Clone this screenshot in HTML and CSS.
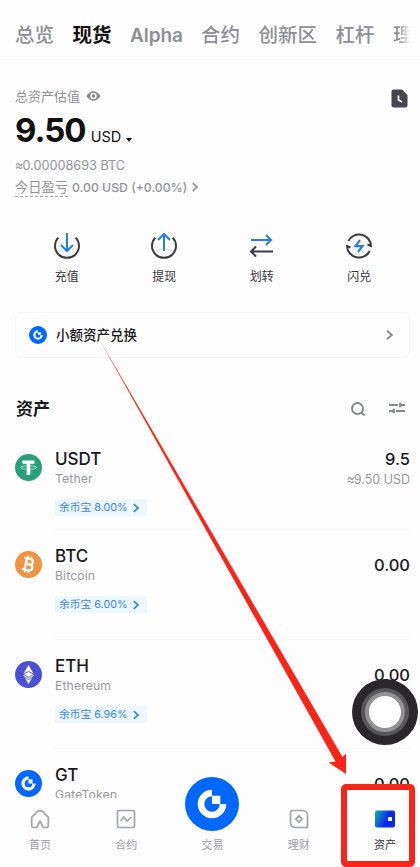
FILE: index.html
```html
<!DOCTYPE html>
<html lang="zh-CN">
<head>
<meta charset="utf-8">
<title>资产</title>
<link rel="stylesheet" href="styles.css">
</head>
<body>
<svg class="defs" width="0" height="0">
  <symbol id="gate" viewBox="0 0 54 54">
    <circle cx="27" cy="27" r="27" fill="#0068ff"/>
    <path d="M27 16A11 11 0 1 0 38 27" fill="none" stroke="#fff" stroke-width="6.600"/>
    <path d="M27 18.700h8.300V27H27z" fill="#fff"/>
  </symbol>
  <symbol id="chev" viewBox="0 0 8 10"><path d="M1.800 1.200 6 5 1.800 8.800" fill="none" stroke="currentColor" stroke-width="1.700"/></symbol>
</svg>
<div class="screen">
  <nav class="tabs">
    <span>总览</span><span class="on">现货</span><span class="alpha">Alpha</span><span>合约</span><span>创新区</span><span>杠杆</span><span class="fade">理</span>
  </nav>
  <section class="summary">
    <div class="top">
      <div class="label">总资产估值
        <svg width="15" height="12" viewBox="0 0 15 12"><path d="M.3 6Q7.500-3.500 14.700 6 7.500 15.500.3 6Z" fill="#85878e"/><circle cx="7.500" cy="6" r="3.200" fill="#fff"/><circle cx="7.500" cy="6" r="1.700" fill="#85878e"/></svg>
      </div>
      <svg class="history" width="17" height="19" viewBox="0 0 17 19"><path d="M2.500.5H11L16.500 6v10.500a2 2 0 0 1-2 2h-12a2 2 0 0 1-2-2v-14a2 2 0 0 1 2-2Z" fill="#464650"/><path d="M7.500 6.500v4.500l3.500 2" fill="none" stroke="#fff" stroke-width="1.700"/></svg>
    </div>
    <div class="total"><b>9.50</b><span>USD</span><i></i></div>
    <div class="btc"><small>≈</small>0.00008693 BTC</div>
    <div class="pnl"><u>今日盈亏</u><span>0.00 USD (+0.00%)</span><svg width="8" height="10"><use href="#chev"/></svg></div>
  </section>
  <section class="actions">
    <div><svg width="28" height="28" viewBox="0 0 28 28"><path d="M5.300 5.600A12 12 0 1 0 22.700 5.600" fill="none" stroke="#3b3b40" stroke-width="2"/><path d="M14 1v18M8 13l6 6 6-6" fill="none" stroke="#267cea" stroke-width="2"/></svg><span>充值</span></div>
    <div><svg width="28" height="28" viewBox="0 0 28 28"><path d="M5.300 5.600A12 12 0 1 0 22.700 5.600" fill="none" stroke="#3b3b40" stroke-width="2"/><path d="M14 19V2M8 8l6-6 6 6" fill="none" stroke="#267cea" stroke-width="2"/></svg><span>提现</span></div>
    <div><svg width="28" height="28" viewBox="0 0 28 28"><path d="M3 8h20M18 3l5 5-5 5" fill="none" stroke="#267cea" stroke-width="2"/><path d="M25 19.500H3M8 14.500l-5 5 5 5" fill="none" stroke="#3b3b40" stroke-width="2"/></svg><span>划转</span></div>
    <div><svg width="28" height="28" viewBox="0 0 28 28"><path d="M3.300 9A12 12 0 0 1 26 14l-3.500-1.500M24.700 19A12 12 0 0 1 2 14l3.500 1.500" fill="none" stroke="#3b3b40" stroke-width="2"/><path d="m15 8-4.500 6.200h7L13 20" fill="none" stroke="#267cea" stroke-width="2.200"/></svg><span>闪兑</span></div>
  </section>
  <section class="convert">
    <svg width="18" height="18"><use href="#gate"/></svg><span>小额资产兑换</span><svg class="go" width="9" height="12"><use href="#chev"/></svg>
  </section>
  <header class="assets-head">
    <h2>资产</h2>
    <svg width="16" height="16" viewBox="0 0 16 16" fill="none" stroke="#85878e" stroke-width="1.900"><circle cx="7.500" cy="7.500" r="5.500"/><path d="m11.500 11.500 3 3"/></svg>
    <svg width="16" height="14" viewBox="0 0 16 14" fill="none" stroke="#85878e" stroke-width="1.800"><path d="M0 4h9M11 4h5M0 10h5M7 10h9"/><path d="M11.200 1.800v4.400M4.800 7.800v4.400" stroke-width="2.200"/></svg>
  </header>
  <main class="list">
    <article class="row usdt">
      <svg class="coin" viewBox="0 0 27 27"><circle cx="13.500" cy="13.500" r="13.500" fill="#28a17b"/><path d="M7.500 6.500h12v3.300h-4.200V21h-3.600V9.800H7.500z" fill="#fff"/><ellipse cx="13.500" cy="13.500" rx="8" ry="1.700" fill="none" stroke="#fff" stroke-width=".6"/></svg>
      <div class="info"><h3>USDT</h3><p>Tether</p><span class="tag">余币宝 8.00%<svg width="8" height="10"><use href="#chev"/></svg></span></div>
      <div class="value"><b>9.5</b><p><small>≈</small>9.50 USD</p></div>
    </article>
    <article class="row">
      <svg class="coin" viewBox="0 0 27 27"><circle cx="13.500" cy="13.500" r="13.500" fill="#f09444"/><g transform="rotate(13 13.500 13.500)" fill="none" stroke="#fff" stroke-width="2.300"><path d="M8 7.800h6.500a2.700 2.700 0 0 1 0 5.400h-4 4.500a3 3 0 0 1 0 6H8M10.700 8v11"/><path d="M11.500 5v3M15 5v3M11.500 19v3M15 19v3" stroke-width="1.600"/></g></svg>
      <div class="info"><h3>BTC</h3><p>Bitcoin</p><span class="tag">余币宝 6.00%<svg width="8" height="10"><use href="#chev"/></svg></span></div>
      <div class="value single"><b>0.00</b></div>
    </article>
    <article class="row eth-row">
      <svg class="coin" viewBox="0 0 27 27"><circle cx="13.500" cy="13.500" r="13.500" fill="#4c50d2"/><path d="m13.500 4 5.500 9.500-5.500 9.500L8 13.500z" fill="#fff"/><path d="m8 13.200 5.500-2.700 5.500 2.700-5.500 3.200zM8 15.300l5.500 3.200 5.500-3.200" fill="none" stroke="#4c50d2" stroke-width=".9"/></svg>
      <div class="info"><h3>ETH</h3><p>Ethereum</p><span class="tag">余币宝 6.96%<svg width="8" height="10"><use href="#chev"/></svg></span></div>
      <div class="value single"><b>0.00</b></div>
    </article>
    <article class="row">
      <svg class="coin"><use href="#gate"/></svg>
      <div class="info"><h3>GT</h3><p>GateToken</p></div>
      <div class="value single"><b>0.00</b></div>
    </article>
  </main>
  <footer class="bar">
    <div><svg width="20" height="20" viewBox="0 0 20 20" fill="none" stroke="#a2a4ab" stroke-width="1.700"><path d="M1.700 8.200 7.500 2.700q2.500-2 5 0l5.800 5.500V16.500a2 2 0 0 1-2 2h-3L10 12l-3.300 6.500h-3a2 2 0 0 1-2-2z" stroke-linejoin="round"/></svg><span>首页</span></div>
    <div><svg width="20" height="20" viewBox="0 0 20 20" fill="none" stroke="#a2a4ab" stroke-width="1.700"><rect x="1.500" y="1.500" width="17" height="17" rx="1.500"/><path d="m4.500 12 3.200-4 3.500 4 4.300-4"/></svg><span>合约</span></div>
    <div class="trade"><svg width="54" height="54"><use href="#gate"/></svg><span>交易</span></div>
    <div><svg width="20" height="20" viewBox="0 0 20 20" fill="none" stroke="#a2a4ab" stroke-width="1.700"><path d="M3.500 1.500H14A4.500 4.500 0 0 1 18.500 6v12.500H6A4.500 4.500 0 0 1 1.500 14V3.500a2 2 0 0 1 2-2ZM10 6.800l3.200 3.200-3.200 3.200L6.800 10z"/></svg><span>理财</span></div>
    <div class="on"><svg width="20" height="20" viewBox="0 0 20 20"><defs><linearGradient id="w" x1="0" y1="0" x2="1" y2=".4"><stop stop-color="#12b5a0"/><stop offset=".7" stop-color="#0829ee"/></linearGradient></defs><rect y="1.500" width="20" height="17" rx="2" fill="url(#w)"/><rect x="13" y="8" width="4" height="4" rx=".5" fill="#fff"/></svg><span>资产</span></div>
  </footer>
  <div class="assist"><div><div></div></div></div>
  <svg class="overlay" width="420" height="867" viewBox="0 0 420 867"><path d="M98 337 342.500 757l3.500-3.500V774l-17.500-11.500 7-1z" fill="#fb2418"/><rect x="344" y="787" width="68" height="77" rx="2" fill="none" stroke="#fb2418" stroke-width="6"/></svg>
</div>
</body>
</html>
```
FILE: styles.css
```css
* { box-sizing: border-box; }
body { margin: 0; background: #fefdfe; font-family: Inter, "Noto Sans CJK SC", sans-serif; color: #18181c; }
h2, h3, p { margin: 0; }
svg { display: block; flex: none; }
.defs { position: absolute; }
.screen { position: relative; width: 420px; height: 867px; overflow: hidden; display: flex; flex-direction: column; }
.tabs { flex: none; height: 60px; padding: 21px 0 0 15px; display: flex; gap: 18.500px; border-bottom: 1px solid #f8f8fa; font-size: 19.500px; line-height: 29px; font-weight: 500; color: #8d8f96; white-space: nowrap; }
.tabs .on { color: #111; font-weight: 700; }
.tabs .alpha { font-weight: 600; font-size: 19px; width: 52.500px; letter-spacing: -.1px; }
.tabs .fade { width: 20px; background: linear-gradient(90deg, #8d8f96 30%, #fefdfe 85%); background-clip: text; color: transparent; }
.summary { height: 158px; flex: none; padding: 26px 12px 0 15px; color: #909299; }
.top { display: flex; justify-content: space-between; height: 23px; }
.label { display: flex; gap: 6px; align-items: center; height: 19px; font-size: 13px; }
.history { margin-top: 3px; }
.total { display: flex; align-items: baseline; height: 44px; line-height: 42px; color: #111; }
.total b { font-size: 33px; letter-spacing: -1px; }
.total span { margin-left: 5px; font-size: 14.500px; }
.total i { margin: 0 0 2px 5px; border: 3.500px solid transparent; border-top: 4px solid #111; border-bottom: 0; }
.btc { height: 24px; line-height: 26px; font-size: 12.700px; }
small { font-size: 1em; letter-spacing: -1px; }
.pnl { display: flex; align-items: center; gap: 4px; height: 20px; font-size: 12.250px; font-weight: 500; }
.pnl u { font-size: 13.250px; font-weight: 400; text-decoration: none; border-bottom: 1px dashed #a8a9ae; line-height: 18px; }
.actions { flex: none; height: 94px; padding: 14px 12px 0 18px; display: grid; grid-template-columns: repeat(4, 1fr); }
.actions div { display: flex; flex-direction: column; align-items: center; gap: 8px; font-size: 12px; line-height: 18px; color: #35353a; }
.convert { flex: none; height: 46px; margin: 0 10px 0 15px; padding: 0 15px 0 13px; display: flex; align-items: center; gap: 9px; border: 1px solid #f5f6f8; border-radius: 8px; font-size: 13.500px; line-height: 18px; font-weight: 500; }
.convert span { margin-top: -1px; }
.go { margin-left: auto; color: #888a90; }
.assets-head { flex: none; height: 88px; padding: 39px 15px 0 16px; display: flex; align-items: flex-start; gap: 23px; }
.assets-head h2 { flex: 1; font-size: 17px; line-height: 24px; }
.assets-head svg { margin-top: 4px; }
.list { flex: none; height: 352px; overflow: hidden; }
.row { display: flex; height: 110px; margin: 0 10px 0 15px; padding-top: 14px; border-bottom: 1px solid #f9f9fb; border-image: linear-gradient(90deg, transparent 40px, #f8f8fa 40px) 1; }
.usdt { height: 84px; padding-top: 1px; }
.eth-row { height: 109px; }
.coin { width: 27px; height: 27px; margin-top: 7px; }
.info { margin-left: 13px; flex: 1; }
.info h3 { font-size: 17px; font-weight: 500; line-height: 24px; }
.info p { font-size: 12.250px; line-height: 16px; color: #9798a0; letter-spacing: .1px; }
.tag { margin-top: 12px; display: flex; align-items: center; justify-content: space-between; width: 92px; height: 17px; padding: 0 7px 0 4px; background: #edf7fe; border-radius: 2px; color: #3786df; font-size: 10.750px; line-height: 16px; white-space: nowrap; }
.value { text-align: right; }
.value b { display: block; font-size: 16.500px; font-weight: 500; line-height: 24px; }
.value p { font-size: 12.500px; line-height: 18px; color: #9798a0; }
.single b { padding-top: 9px; }
.bar { flex: 1; padding: 11px 0 0; margin: 0 -8px 0 -3px; display: grid; grid-template-columns: repeat(5, 1fr); }
.bar div { display: flex; flex-direction: column; align-items: center; gap: 8px; font-size: 11px; line-height: 16px; color: #9b9da5; }
.bar .trade svg { margin: -32px 0 -2px; }
.bar .on { color: #35353a; }
.assist { position: absolute; left: 352px; top: 679px; width: 66px; height: 66px; padding: 9px; border-radius: 50%; background: #29272a; }
.assist div { height: 100%; padding: 4px; border-radius: 50%; background: #58575a; }
.assist div div { border: 4px solid #929194; background: #fff; }
.overlay { position: absolute; left: 0; top: 0; }
```
